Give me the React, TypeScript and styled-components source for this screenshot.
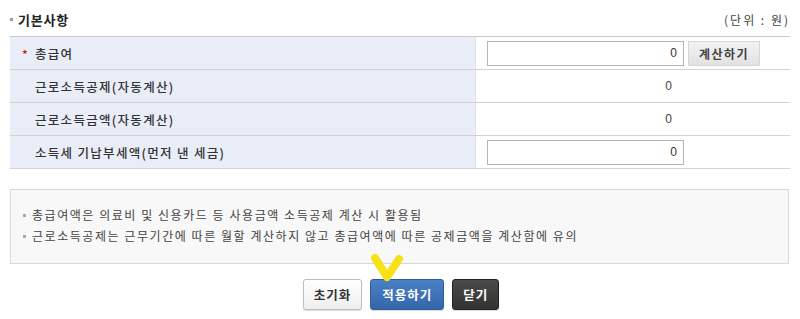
import styled, { createGlobalStyle } from "styled-components";

const Global = createGlobalStyle`
  body {
    margin: 0;
    background: #fff;
    font-family: "Noto Sans CJK KR", "Noto Sans", sans-serif;
    color: #333;
  }
`;

const Page = styled.div`
  position: relative;
  width: 800px;
  height: 319px;
  padding: 0 10px;
  box-sizing: border-box;
`;

const Header = styled.div`
  height: 36px;
  display: flex;
  align-items: center;
  justify-content: space-between;
  padding-top: 2px;
  box-sizing: border-box;
`;

const Title = styled.h2`
  margin: 0;
  font-size: 13px;
  font-weight: 700;
  color: #222;
  letter-spacing: 0.8px;
  display: flex;
  align-items: center;
  gap: 5px;
  &::before {
    content: "";
    width: 3px;
    height: 3px;
    background: #999;
  }
`;

const Unit = styled.span`
  font-size: 12px;
  color: #444;
  letter-spacing: 2px;
  white-space: pre;
`;

const Table = styled.div`
  border-top: 1px solid #c9c9c9;
`;

const Row = styled.div`
  display: grid;
  grid-template-columns: 466px 1fr;
  height: 33px;
  border-bottom: 1px solid #d2d2d2;
  box-sizing: border-box;
`;

const Label = styled.div<{ $required?: boolean }>`
  background: #e9edf7;
  border-right: 1px solid #dde2ee;
  display: flex;
  align-items: center;
  padding-left: 12px;
  font-size: 12.5px;
  font-weight: 500;
  color: #333;
  letter-spacing: 1.3px;
  &::before {
    content: "*";
    width: 13px;
    color: #c8102e;
    font-size: 12px;
    visibility: ${(p) => (p.$required ? "visible" : "hidden")};
  }
`;

const Cell = styled.div`
  display: flex;
  align-items: center;
  padding-left: 11px;
  gap: 4px;
`;

const Input = styled.input`
  width: 197px;
  height: 25px;
  box-sizing: border-box;
  border: 1px solid #b5b5b5;
  text-align: right;
  padding: 0 6px;
  font-family: "Liberation Sans", sans-serif;
  font-size: 12px;
  color: #333;
  outline: none;
`;

const Value = styled.span`
  width: 197px;
  text-align: right;
  padding-right: 12px;
  box-sizing: border-box;
  font-family: "Liberation Sans", sans-serif;
  font-size: 12px;
  color: #444;
`;

const CalcButton = styled.button`
  height: 25px;
  width: 72px;
  border: 1px solid #d6d6d6;
  background: linear-gradient(#f2f2f2, #e2e2e2);
  font-family: inherit;
  font-size: 12px;
  font-weight: 700;
  color: #444;
  letter-spacing: 1.5px;
  padding: 0;
`;

const Notice = styled.ul`
  margin: 20px 1px 0 0;
  height: 75px;
  box-sizing: border-box;
  border: 1px solid #d8d8d8;
  background: #f8f8f8;
  list-style: none;
  padding: 16px 0 0 12px;
  display: flex;
  flex-direction: column;
  gap: 3px;
`;

const Item = styled.li`
  display: flex;
  align-items: center;
  gap: 6px;
  font-size: 12px;
  color: #444;
  line-height: 18px;
  letter-spacing: 1.55px;
  &::before {
    content: "";
    width: 3px;
    height: 3px;
    background: #a8a8a8;
  }
`;

const Actions = styled.div`
  display: flex;
  justify-content: center;
  gap: 8px;
  margin-top: 15px;
  padding-left: 2px;
`;

const Button = styled.button<{ $variant: "default" | "primary" | "dark" }>`
  height: 31px;
  padding: 0 ${(p) => (p.$variant === "primary" ? "11px" : "10px")};
  border-radius: 3px;
  font-family: inherit;
  font-size: 12.5px;
  font-weight: 700;
  letter-spacing: 1px;
  border: 1px solid
    ${(p) =>
      p.$variant === "primary" ? "#2d5d9e" : p.$variant === "dark" ? "#222" : "#bdbdbd"};
  background: ${(p) =>
    p.$variant === "primary"
      ? "linear-gradient(#4a80c4, #3466aa)"
      : p.$variant === "dark"
      ? "linear-gradient(#4a4a4a, #333)"
      : "linear-gradient(#fff, #eee)"};
  color: ${(p) => (p.$variant === "default" ? "#333" : "#fff")};
  box-shadow: 0 1px 1px rgba(0, 0, 0, 0.15);
`;

const Mark = styled.svg`
  position: absolute;
  left: 367px;
  top: 250px;
  pointer-events: none;
`;

function App() {
  return (
    <Page>
      <Global />
      <Header>
        <Title>기본사항</Title>
        <Unit>(단위 : 원)</Unit>
      </Header>
      <Table>
        <Row>
          <Label $required>총급여</Label>
          <Cell>
            <Input defaultValue="0" />
            <CalcButton>계산하기</CalcButton>
          </Cell>
        </Row>
        <Row>
          <Label>근로소득공제(자동계산)</Label>
          <Cell>
            <Value>0</Value>
          </Cell>
        </Row>
        <Row>
          <Label>근로소득금액(자동계산)</Label>
          <Cell>
            <Value>0</Value>
          </Cell>
        </Row>
        <Row>
          <Label>소득세 기납부세액(먼저 낸 세금)</Label>
          <Cell>
            <Input defaultValue="0" />
          </Cell>
        </Row>
      </Table>
      <Notice>
        <Item>총급여액은 의료비 및 신용카드 등 사용금액 소득공제 계산 시 활용됨</Item>
        <Item>근로소득공제는 근무기간에 따른 월할 계산하지 않고 총급여액에 따른 공제금액을 계산함에 유의</Item>
      </Notice>
      <Actions>
        <Button $variant="default">초기화</Button>
        <Button $variant="primary">적용하기</Button>
        <Button $variant="dark">닫기</Button>
      </Actions>
      <Mark width="40" height="36" viewBox="0 0 40 36">
        <path
          d="M8 8 L20 27 L32 9"
          fill="none"
          stroke="#f7e21a"
          strokeWidth="8"
          strokeLinecap="round"
          strokeLinejoin="round"
        />
      </Mark>
    </Page>
  );
}

export default App;
